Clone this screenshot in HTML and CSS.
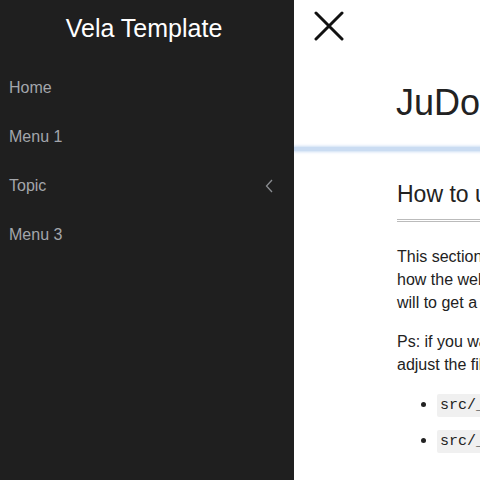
FILE: index.html
```
<!DOCTYPE html>
<html lang="en">
<head>
<meta charset="utf-8">
<title>Vela Template</title>
<link rel="stylesheet" href="styles.css">
</head>
<body>
<nav class="sidebar">
  <div class="brand">Vela Template</div>
  <ul class="menu">
    <li class="menu-item">Home</li>
    <li class="menu-item">Menu 1</li>
    <li class="menu-item has-sub">Topic
      <svg class="chev" width="8" height="14" viewBox="0 0 8 14"><path d="M7 1 L1.5 7 L7 13" fill="none" stroke="#8a8d91" stroke-width="1.3"/></svg>
    </li>
    <li class="menu-item">Menu 3</li>
  </ul>
</nav>
<main class="main">
  <div class="topbar">
    <svg class="close" width="30" height="30" viewBox="0 0 30 30"><path d="M2 2 L28 28 M28 2 L2 28" stroke="#111" stroke-width="3" stroke-linecap="round"/></svg>
  </div>
  <header class="page-head">
    <h1 class="title">JuDoc Template</h1>
  </header>
  <article class="content">
    <h2 class="section-title">How to use this template</h2>
    <p>This section is meant as a refresher if you're new to JuDoc.<br>how the website renders and the corresponding markdown<br>will to get a feel for how things work!</p>
    <p>Ps: if you want to modify the header or footer or the general look<br>adjust the files in</p>
    <ul class="files">
      <li><code>src/_css/</code></li>
      <li><code>src/_html_parts/</code></li>
    </ul>
  </article>
</main>
</body>
</html>
```
FILE: styles.css
```
html, body {
  margin: 0;
  padding: 0;
  height: 100%;
  overflow: hidden;
}
body {
  display: flex;
  font-family: "Liberation Sans", Arial, sans-serif;
  background: #ffffff;
}
.sidebar {
  width: 294px;
  flex: 0 0 294px;
  height: 480px;
  background: #1f1f1f;
  padding-top: 13px;
  box-sizing: border-box;
}
.brand {
  color: #ffffff;
  font-size: 25px;
  line-height: 30px;
  text-align: center;
  margin-bottom: 20px;
  padding-right: 6px;
}
.menu {
  list-style: none;
  margin: 0;
  padding: 0;
}
.menu-item {
  display: flex;
  align-items: center;
  justify-content: space-between;
  height: 49px;
  padding: 0 21px 0 9px;
  font-size: 16px;
  color: #a3a6ab;
}
.chev {
  display: block;
}
.main {
  flex: 1;
  min-width: 0;
  overflow: hidden;
}
.topbar {
  padding: 11px 0 0 20px;
  height: 30px;
}
.close {
  display: block;
}
.page-head {
  position: relative;
  width: 700px;
  padding: 40px 0 0 102px;
  height: 66px;
}
.page-head::after {
  content: "";
  position: absolute;
  left: 0;
  right: 0;
  bottom: -4px;
  height: 4px;
  background: #cadcf2;
  box-shadow: 0 0 3px 1px rgba(190, 212, 240, 0.8);
}
.title {
  margin: 0;
  font-size: 36px;
  font-weight: normal;
  line-height: 1.2;
  color: #222;
  white-space: nowrap;
}
.content {
  width: 700px;
  padding: 34px 0 0 103px;
  color: #222;
}
.section-title {
  margin: 0;
  font-size: 23px;
  font-weight: normal;
  line-height: 1.2;
  padding-bottom: 10px;
  border-bottom: 3px double #bbb;
  width: 600px;
}
.content p {
  font-size: 16px;
  line-height: 23px;
  margin: 23px 0 0;
  white-space: nowrap;
}
.content p + p {
  margin-top: 16px;
}
.files {
  margin: 16px 0 0;
  padding-left: 40px;
  font-size: 16px;
  line-height: 23px;
}
.files li + li {
  margin-top: 11px;
}
code {
  font-family: "Liberation Mono", "Courier New", monospace;
  font-size: 15px;
  background: #f0f0f0;
  padding: 3px 3px;
  border-radius: 2px;
}
```
